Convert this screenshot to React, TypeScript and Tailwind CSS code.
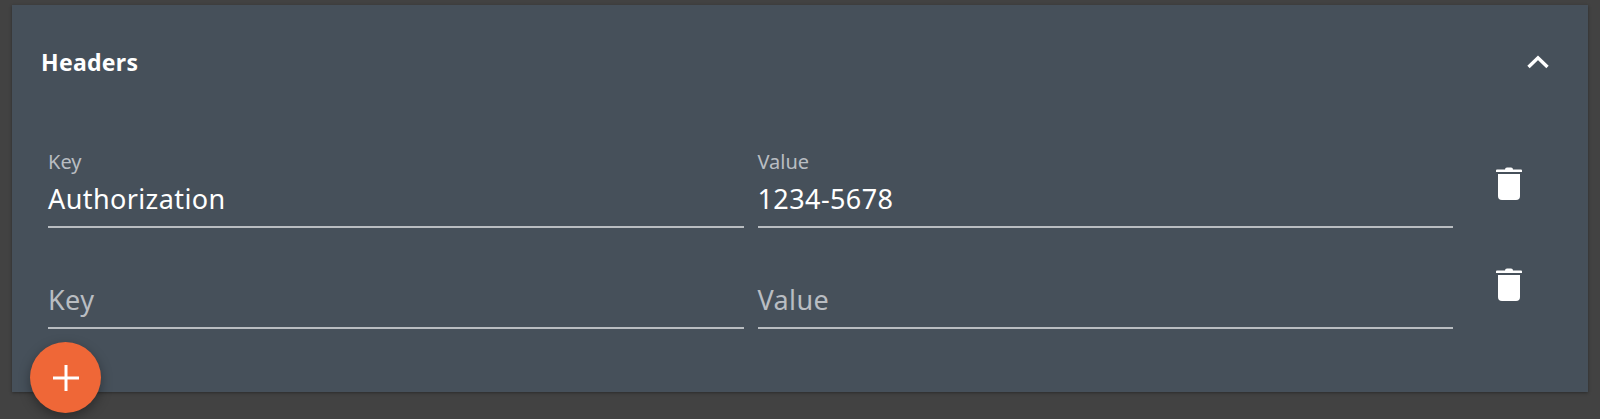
import React from 'react';

const fontStack = "font-['Noto_Sans','Open_Sans',sans-serif]";

const TrashIcon = () => (
  <svg width="26" height="34" viewBox="0 0 26 34" fill="#ffffff">
    <path d="M9 2.5 Q9 0.5 11 0.5 H15 Q17 0.5 17 2.5 H25 Q26 2.5 26 3.5 V5 H0 V3.5 Q0 2.5 1 2.5 Z" />
    <path d="M2 7 H24 V29 Q24 33 20 33 H6 Q2 33 2 29 Z" />
  </svg>
);

const ChevronUp = () => (
  <svg width="22" height="14" viewBox="0 0 22 14" fill="none" stroke="#ffffff" strokeWidth="3.4">
    <path d="M1.5 12 L11 2.8 L20.5 12" />
  </svg>
);

interface FieldProps {
  label: string;
  value?: string;
}

const Field: React.FC<FieldProps> = ({ label, value }) => (
  <div className="flex-1 h-[73px] flex flex-col justify-end border-b-2 border-[#b9bdc1]">
    {value ? (
      <>
        <div className="text-[20px] leading-[20px] text-[#b9bdc2] mb-[9px]">{label}</div>
        <div className="text-[27px] leading-[36px] tracking-[0.4px] text-white mb-[9px]">{value}</div>
      </>
    ) : (
      <div className="text-[27px] leading-[36px] tracking-[0.4px] text-[#b9bdc2] mb-[9px]">{label}</div>
    )}
  </div>
);

const HeaderRow: React.FC<FieldProps & { keyLabel: string }> = ({ keyLabel, label, value }) => (
  <div className="flex items-start">
    <div className="flex flex-1 gap-[14px]">
      <Field label="Key" value={keyLabel || undefined} />
      <Field label={label} value={value} />
    </div>
    <div className="w-[135px] pl-[43px] pt-[12px]">
      <TrashIcon />
    </div>
  </div>
);

export default function App() {
  return (
    <div className={`relative w-[1600px] h-[419px] overflow-hidden bg-[#424242] pt-[5px] px-[12px] ${fontStack}`}>
      <div className="h-[387px] bg-[#46505a] shadow-[0_1px_3px_rgba(0,0,0,0.35)]">
        {/* Panel header */}
        <div className="flex items-center justify-between h-[114px] pl-[29px] pr-[39px] mb-[36px]">
          <h2 className="text-[23px] font-bold tracking-[0.3px] text-white">Headers</h2>
          <ChevronUp />
        </div>

        {/* Key / value rows */}
        <div className="flex flex-col gap-[28px] pl-[36px]">
          <HeaderRow keyLabel="Authorization" label="Value" value="1234-5678" />
          <HeaderRow keyLabel="" label="Value" />
        </div>
      </div>

      {/* Add button */}
      <button className="absolute left-[30px] top-[342px] w-[71px] h-[71px] rounded-full bg-[#ef6737] shadow-[0_4px_12px_rgba(0,0,0,0.35)] flex items-center justify-center">
        <svg width="26" height="26" viewBox="0 0 26 26" fill="#ffffff">
          <rect x="11.5" y="0" width="3" height="26" />
          <rect x="0" y="11.5" width="26" height="3" />
        </svg>
      </button>
    </div>
  );
}
